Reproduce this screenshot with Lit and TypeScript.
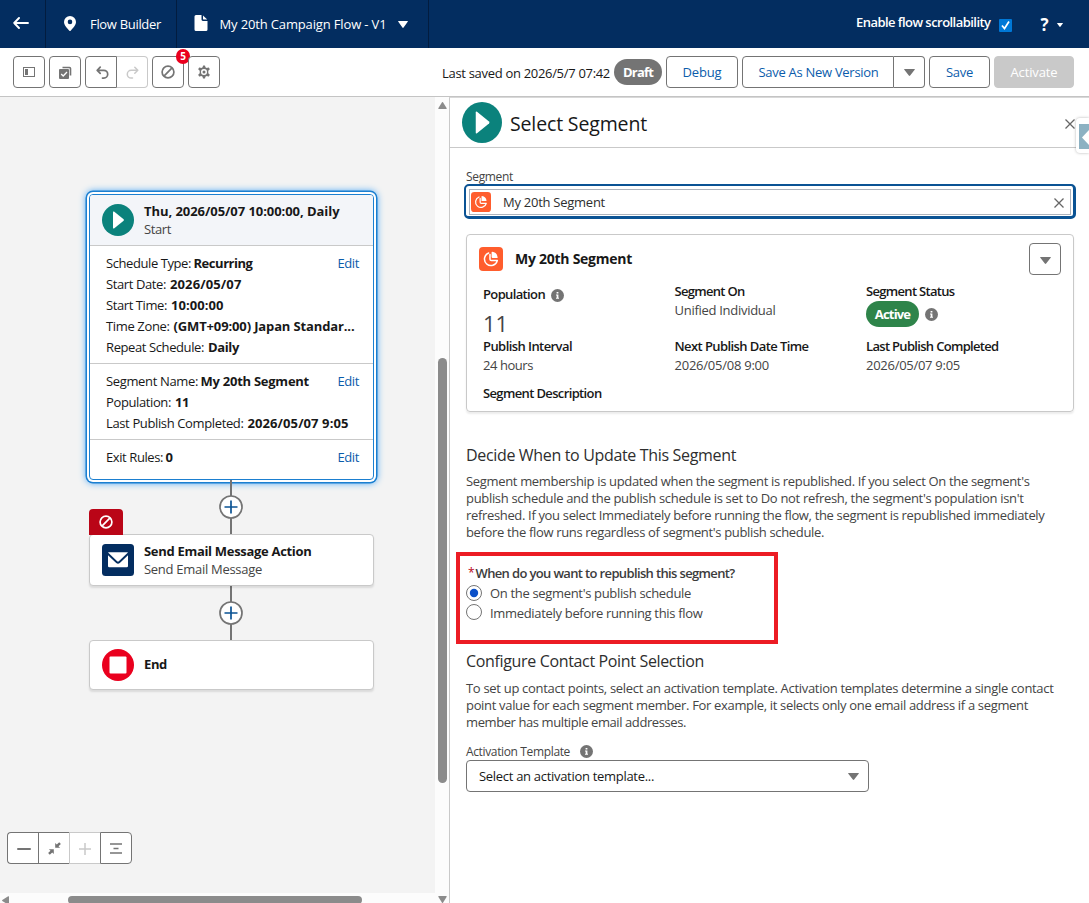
import { LitElement, html, css, svg } from "lit";
import { customElement, property } from "lit/decorators.js";

/** A single line of text tracked so that it fills a given advance width. */
@customElement("fit-line")
class FitLine extends LitElement {
  @property() text = "";
  @property({ type: Number }) w = 0;
  static styles = css`
    :host { display: inline-block; white-space: pre; flex: none; }
  `;
  updated() {
    this.style.letterSpacing = "0px";
    const natural = this.getBoundingClientRect().width;
    const gap = (this.w - natural) / Math.max(1, this.text.length);
    this.style.letterSpacing = gap.toFixed(3) + "px";
  }
  render() {
    return html`${this.text}`;
  }
}

const t = (text: string, w: number, cls = "") =>
  html`<fit-line class=${cls} .text=${text} .w=${w}></fit-line>`;

const ban = (s: number) => svg`<svg width=${s} height=${s} viewBox="0 0 14 14" fill="none" stroke="currentColor" stroke-width="1.7"><circle cx="7" cy="7" r="5.9"/><path d="M3.2 10.8L10.8 3.2"/></svg>`;
const caret = (w: number, h: number) => svg`<svg width=${w} height=${h} viewBox="0 0 10 6" preserveAspectRatio="none" fill="currentColor"><path d="M.6 0h8.8q.9 0 .3.7L5.6 5.6q-.6.6-1.2 0L.3.7Q-.3 0 .6 0z"/></svg>`;
const cross = (s: number) => svg`<svg width=${s} height=${s} viewBox="0 0 10 10" fill="none" stroke="currentColor" stroke-width="1.3"><path d="M.5.5l9 9M9.5.5l-9 9"/></svg>`;
const info = html`<svg class="info" width="13" height="13" viewBox="0 0 13 13"><circle cx="6.5" cy="6.5" r="6.5" fill="#747474"/><path fill="#fff" d="M5.6 2.9h1.8v1.6H5.6zM5 5.4h2.4v3.4H8v1H5v-1h.7V6.4H5z"/></svg>`;
const play = (w: number, h: number) => html`<svg class="play" width=${w} height=${h} viewBox="0 0 32 32" preserveAspectRatio="none"><circle cx="16" cy="16" r="16" fill="#0b827c"/><path fill="#fff" d="M11 8.2q0-1.2 1-.6l9.600 7.700q.7.700 0 1.400L12 24.400q-1 .6-1-.6z"/></svg>`;
const pie = (s: number) => html`<svg width=${s} height=${s} viewBox="0 0 24 24"><rect width="24" height="24" rx="4" fill="#ff5d2d"/><path fill="none" stroke="#fff" stroke-width="1.500" stroke-linejoin="round" stroke-linecap="round" d="M9.600 6A6.500 6.500 0 1 0 18.300 13.600H12.400Q11 13.600 11 12.200V7.500"/><path fill="#fff" d="M12.600 5.300q0-.6.6-.5a6.300 6.300 0 0 1 5.400 5.400q.1.700-.5.700h-4.700q-.8 0-.8-.8z"/></svg>`;
const plusDot = html`<div class="stem"><svg width="24" height="24" viewBox="0 0 24 24"><circle cx="12" cy="12" r="11" fill="#fff" stroke="#747474" stroke-width="1.700"/><path d="M5.500 12h13M12 5.500v13" stroke="#0b5394" stroke-width="1.700"/></svg></div>`;

const row = (label: string, lw: number, value: string, vw: number, edit = false) => html`
  <div class="row ${edit ? "first" : ""}">
    ${t(label, lw)}${t(value, vw, "b")}${edit ? html`<span class="edit">${t("Edit", 21.5)}</span>` : ""}
  </div>`;

@customElement("app-root")
class AppRoot extends LitElement {
  static styles = css`
    * { box-sizing: border-box; }
    :host { display: flex; flex-direction: column; width: 1089px; height: 903px; overflow: hidden; background: #fff; color: #181818; font: 13px/18px "Open Sans", "Noto Sans", sans-serif; }
    svg { display: block; flex: none; }
    .b { font-weight: 700; }
    .semi { font-weight: 600; }

    .top { height: 48px; flex: none; background: #032d60; color: #fff; display: flex; align-items: center; }
    .top .cell { height: 48px; display: flex; align-items: center; border-right: 1px solid #021c3f; }
    .back { width: 46px; padding: 0 0 2px 13px; }
    .brand { width: 131px; padding-left: 18px; gap: 14px; }
    .brand svg, .doc svg { margin-top: -2px; }
    .doc { width: 252px; padding-left: 17px; gap: 11.500px; }
    .doc .caret svg { margin-top: 1px; }
    .enable { margin-left: 427px; display: flex; align-items: center; gap: 8px; }
    .enable fit-line { margin-top: -4px; }
    .check { width: 13px; height: 13px; background: #0078d7; margin-top: 3px; border-radius: 1px; }
    .help { margin-left: 29px; display: flex; align-items: center; gap: 7px; font-size: 17px; }
    .help fit-line { margin-top: 2px; }
    .help svg { margin-top: 1px; }

    .bar { height: 49px; flex: none; border-bottom: 1px solid #c4c4c4; display: flex; align-items: center; padding: 0 15px 1px 13px; gap: 4px; }
    .btn { height: 32px; border: 1px solid #747474; border-radius: 4px; display: flex; align-items: center; justify-content: center; color: #747474; background: #fff; flex: none; }
    .btn.ib { width: 32px; position: relative; padding-top: 1px; }
    .pair { display: flex; }
    .pair .ib:first-child { border-radius: 4px 0 0 4px; padding-left: 2px; }
    .pair .ib:last-child { border-radius: 0 4px 4px 0; border-left: 0; width: 31px; }
    .off { border-color: #c9c9c9; color: #c9c9c9; }
    .badge { position: absolute; left: 23px; top: -8px; width: 14px; height: 15px; border-radius: 7px; background: #ea001e; color: #fff; font: 700 10px/15px "Open Sans", sans-serif; text-align: center; }
    .right { margin-left: auto; display: flex; align-items: center; gap: 4px; }
    .right .when { margin-top: 2px; }
    .link { color: #0b5cab; }
    .pill { height: 26px; border-radius: 13px; display: flex; align-items: center; justify-content: center; color: #fff; font-weight: 700; background: #747474; width: 48px; }
    .debug { width: 72px; }
    .saveas { width: 152px; border-radius: 4px 0 0 4px; padding-left: 1px; }
    .more { width: 31px; border-left: 0; border-radius: 0 4px 4px 0; padding-top: 2px; }
    .save { width: 61px; }
    .activate { width: 80px; background: #c9c9c9; border-color: #c9c9c9; color: #fff; }

    .main { flex: 1; min-height: 0; display: flex; }
    .work { width: 435px; display: flex; flex-direction: column; flex: none; }
    .canvas { height: 796px; background: #f3f3f3; padding: 97px 0 0 89px; position: relative; flex: none; }
    .node { width: 285px; background: #fff; border: 1px solid #c9c9c9; border-radius: 4px; box-shadow: 0 2px 2px rgba(0,0,0,.1); display: flex; align-items: center; padding-left: 12px; gap: 10px; }
    .titles { display: flex; flex-direction: column; align-items: flex-start; }
    .titles .sub { color: #444; }
    .start { display: block; padding: 0; height: 286px; border-color: #1b7fd0; box-shadow: 0 0 0 2px #fff, 0 0 0 3.500px #1b7fd0, 0 0 7px 3px #3fa2f5; }
    .head { height: 51px; display: flex; align-items: center; gap: 10px; padding-left: 12px; background: #f3f5f9; border-bottom: 1px solid #c9c9c9; border-radius: 3px 3px 0 0; }
    .sect { padding: 7px 14px 5px 16px; border-bottom: 1px solid #c9c9c9; }
    .sect:last-child { border: 0; }
    .row { display: flex; line-height: 21px; gap: 4px; }
    .row.first { gap: 2.500px; }
    .edit { margin-left: auto; color: #0b5cab; }
    .stem { width: 285px; height: 54px; display: flex; align-items: center; justify-content: center; padding-right: 1px; background: linear-gradient(#747474, #747474) 141px 0 / 2px 100% no-repeat; }
    .mail { height: 52px; position: relative; }
    .err { position: absolute; left: -1px; top: -26px; width: 34px; height: 26px; background: #ba0517; border-radius: 4px 4px 0 0; color: #fff; display: flex; align-items: center; justify-content: center; }
    .end { height: 50px; }
    .end fit-line { margin-top: -2px; }
    .zoomer { position: absolute; left: 7px; top: 735px; display: flex; }
    .zoomer .btn { width: 31px; border-radius: 0; border-right-width: 0; padding-top: 1px; }
    .zoomer .btn:first-child { border-radius: 4px 0 0 4px; padding-left: 2px; }
    .zoomer .btn:nth-child(3) { border-left: 1px solid #c9c9c9; }
    .zoomer .btn:last-child { width: 32px; border-right-width: 1px; border-radius: 0 4px 4px 0; }
    .hbar { height: 10px; background: #fcfcfc; display: flex; padding: 3px 0 0 2px; gap: 59px; }
    .hthumb { width: 294px; height: 8px; border-radius: 4px; background: #8b8b8b; }
    .vbar { width: 14px; flex: none; background: #fcfcfc; display: flex; flex-direction: column; align-items: center; padding: 5px 0 0 1px; color: #8b8b8b; }
    .vthumb { width: 9px; height: 427px; border-radius: 5px; background: #8b8b8b; margin: 249px 0 113px; }

    .panel { flex: 1; min-width: 0; border-left: 1px solid #c9c9c9; border-top: 1px solid #d8d8d8; position: relative; }
    .phead { height: 50px; border-bottom: 1px solid #c9c9c9; display: flex; align-items: center; padding: 0 14px 0 12px; gap: 8px; }
    .phead .ttl { font-size: 19.500px; line-height: 26px; margin-top: 3px; }
    .x { margin-left: auto; color: #666; }
    .phead .x { margin-top: 2px; }
    .tab { position: absolute; right: 0; top: 20px; width: 13px; height: 35px; background: #fff; border-radius: 4px 0 0 4px; box-shadow: 0 0 3px rgba(0,0,0,.3); padding: 6px 0 0 3px; }
    .body { padding: 20px 15px 0 16px; color: #444; }
    .lab { font-size: 12px; line-height: 16px; display: flex; align-items: center; gap: 10px; }
    .lab fit-line { position: relative; top: 1px; }
    .combo { height: 35px; margin: 0 -2px; border: 2.500px solid #0b5394; border-width: 2px 3px 3px 2px; border-radius: 5px; padding: 3px 2px 2px 3px; }
    .combo .in { height: 26px; border: 1px solid #aeb4bd; display: flex; align-items: center; padding: 0 6px 0 1px; gap: 12px; color: #2e2e2e; }
    .combo .x { margin-top: 1px; }
    .card { margin-top: 15px; height: 178px; border: 1px solid #c9c9c9; border-radius: 4px; box-shadow: 0 2px 2px rgba(0,0,0,.08); }
    .chead { display: flex; align-items: center; margin-top: 8px; padding: 0 12px; gap: 12px; color: #181818; font-size: 14px; height: 32px; }
    .chead .btn { width: 32px; margin-left: auto; padding-top: 2px; }
    .grid { display: grid; grid-template-columns: 191.500px 191.500px 1fr; grid-template-rows: 55px 47px 18px; padding: 7px 0 0 16px; }
    .cellc { display: flex; flex-direction: column; align-items: flex-start; }
    .cellc .b { color: #181818; font-weight: 600; }
    .inl { display: flex; align-items: center; gap: 6px; }
    .pop { margin-top: 3px; }
    .pop svg { margin-top: 2px; }
    .big { font-size: 22px; line-height: 30px; margin: 5px 0 0 0; }
    .v { margin-top: 1px; }
    .act { background: #2e844a; width: 53px; margin-top: 1px; }
    .act + svg { margin-top: 2px; }
    .h { font-size: 16px; line-height: 20px; color: #2e2e2e; display: flex; }
    .h.decide { margin-top: 33px; }
    .h.config { margin-top: 7px; }
    .p { margin-top: 8px; line-height: 17px; display: flex; flex-direction: column; align-items: flex-start; }
    .config + .p { margin-top: 9px; }
    .box { width: 322px; height: 92px; margin: 11px 0 0 -10px; border: 4px solid #ec1c24; padding: 7px 0 0 6px; }
    .q { display: flex; padding-left: 2px; height: 20px; line-height: 20px; gap: 2px; }
    .q .b { font-weight: 600; color: #3c3c3c; }
    .q .ast { color: #ba0517; font-size: 12px; }
    .opt { display: flex; align-items: center; height: 20px; gap: 8px; }
    .opt + .opt svg { margin-top: -2px; }
    .lab.tmpl { margin-top: 12px; }
    .sel { width: 403px; height: 32px; border: 1px solid #747474; border-radius: 4px; display: flex; align-items: center; justify-content: space-between; padding: 0 9px 0 12px; color: #181818; margin-top: 1px; }
    .gray { color: #747474; display: flex; padding-top: 1px; }
  `;

  render() {
    return html`
      <header class="top">
        <div class="cell back"><svg width="16" height="12" viewBox="0 0 16 12" fill="none" stroke="#fff" stroke-width="1.900" stroke-linecap="round" stroke-linejoin="round"><path d="M15 6H1.200M6 1L1.200 6 6 11"/></svg></div>
        <div class="cell brand"><svg width="12" height="15" viewBox="0 0 12 15"><path fill="#fff" fill-rule="evenodd" d="M6 0a6 6 0 0 1 6 6c0 3.500-3.800 7-5.400 8.700q-.6.600-1.200 0C3.800 13 0 9.500 0 6a6 6 0 0 1 6-6zm0 3.600a2.300 2.300 0 1 0 0 4.600 2.300 2.300 0 0 0 0-4.600z"/></svg>${t("Flow Builder", 71)}</div>
        <div class="cell doc"><svg width="14" height="16" viewBox="0 0 14 16" fill="#fff"><path d="M2 0h5.500v4.500q0 1.400 1.400 1.400H13.500V14.500q0 1.500-1.500 1.500H2Q.500 16 .500 14.500v-13Q.500 0 2 0z"/><path d="M9 .4l4.200 4.100H9.400q-.4 0-.4-.4z"/></svg>${t("My 20th Campaign Flow - V1", 167)}<span class="caret">${caret(10, 7)}</span></div>
        <div class="enable">${t("Enable flow scrollability", 134.5, "semi")}<div class="check"><svg width="13" height="13" viewBox="0 0 13 13" fill="none" stroke="#fff" stroke-width="1.700"><path d="M3 6.500l2.500 3L10 2.500"/></svg></div></div>
        <div class="help">${t("?", 9, "b")}${caret(6, 4)}</div>
      </header>

      <div class="bar">
        <div class="btn ib"><svg width="12" height="10" viewBox="0 0 12 10"><rect x=".5" y=".5" width="11" height="9" fill="none" stroke="#747474"/><rect x="2" y="2" width="3" height="6" fill="#747474"/></svg></div>
        <div class="btn ib"><svg width="13" height="13" viewBox="0 0 13 13"><path d="M3.500 1.500h7q1 0 1 1v7" fill="none" stroke="#747474" stroke-width="1.600"/><rect y="3" width="10" height="10" rx="1" fill="#747474"/><path d="M2.200 8l2 2L8 6" fill="none" stroke="#fff" stroke-width="1.300"/></svg></div>
        <div class="pair">
          <div class="btn ib"><svg width="13" height="13" viewBox="0 0 13 13" fill="none" stroke="currentColor" stroke-width="1.700" stroke-linecap="round" stroke-linejoin="round"><path d="M4.200 1.200L1.200 4.300l3 3M1.500 4.300h6.300a3.900 3.900 0 0 1 0 7.800H6.500"/></svg></div>
          <div class="btn ib off"><svg width="13" height="13" viewBox="0 0 13 13" fill="none" stroke="currentColor" stroke-width="1.500" stroke-linecap="round" stroke-linejoin="round"><path d="M8.800 1.200l3 3.100-3 3M11.500 4.300H5.200a3.900 3.900 0 0 0 0 7.800h1.300"/></svg></div>
        </div>
        <div class="btn ib">${ban(14)}<span class="badge">5</span></div>
        <div class="btn ib"><svg width="14" height="14" viewBox="0 0 14 14"><path fill="#747474" fill-rule="evenodd" d="M6 .7Q6 .4 6.400.4h1.200q.4 0 .5.400l.3 1.500 1.300.8 1.700-.5q.4-.1.600.2l.7 1.200q.2.400-.1.600L11.300 5.800v2.400l1.300 1.200q.3.200.1.600L12 11.200q-.2.300-.6.200l-1.700-.5-1.300.8-.3 1.500q-.1.400-.5.400H6.400q-.4 0-.5-.4l-.3-1.500-1.300-.8-1.700.5q-.4.100-.6-.2L1.300 10q-.2-.4.100-.6l1.300-1.200V5.800L1.400 4.600q-.3-.2-.1-.6L2 2.800q.2-.3.600-.2l1.700.5 1.300-.8zM7 4a3 3 0 1 0 0 6 3 3 0 0 0 0-6z"/><circle cx="7" cy="7" r="1.500" fill="#747474"/></svg></div>
        <div class="right">
          ${t("Last saved on 2026/5/7 07:42", 168, "when")}
          <div class="pill">${t("Draft", 30)}</div>
          <div class="btn debug link">${t("Debug", 39)}</div>
          <div class="pair"><div class="btn saveas link">${t("Save As New Version", 120)}</div><div class="btn more">${caret(11, 7)}</div></div>
          <div class="btn save link">${t("Save", 27)}</div>
          <div class="btn activate">${t("Activate", 47)}</div>
        </div>
      </div>

      <div class="main">
        <div class="work">
          <div class="canvas">
            <div class="node start">
              <div class="head">${play(32, 32)}<div class="titles">${t("Thu, 2026/05/07 10:00:00, Daily", 195.5, "b")}${t("Start", 27, "sub")}</div></div>
              <div class="sect">
                ${row("Schedule Type:", 85, "Recurring", 59, true)}
                ${row("Start Date:", 60, "2026/05/07", 71.5)}
                ${row("Start Time:", 61, "10:00:00", 52.5)}
                ${row("Time Zone:", 63.5, "(GMT+09:00) Japan Standar...", 181)}
                ${row("Repeat Schedule:", 98, "Daily", 31)}
              </div>
              <div class="sect">
                ${row("Segment Name:", 92, "My 20th Segment", 108.5, true)}
                ${row("Population:", 65, "11", 14)}
                ${row("Last Publish Completed:", 137.5, "2026/05/07 9:05", 101)}
              </div>
              <div class="sect">${row("Exit Rules:", 57, "0", 7.5, true)}</div>
            </div>
            ${plusDot}
            <div class="node mail">
              <span class="err">${ban(14)}</span>
              <svg width="32" height="32" viewBox="0 0 32 32"><rect width="32" height="32" rx="3.500" fill="#032d60"/><path fill="#fff" d="M6.500 8.300h19q.6 0 .2.500l-8.900 8.500q-.8.700-1.600 0L6.300 8.800q-.4-.5.200-.5zM6 11.200l8.200 7.900q1.800 1.500 3.600 0L26 11.200V22q0 1.300-1.300 1.300H7.300Q6 23.300 6 22z"/></svg>
              <div class="titles">${t("Send Email Message Action", 167.5, "b")}${t("Send Email Message", 118, "sub")}</div>
            </div>
            ${plusDot}
            <div class="node end">
              <svg width="32" height="32" viewBox="0 0 32 32"><circle cx="16" cy="16" r="16" fill="#ea001e"/><rect x="7.500" y="7.500" width="17" height="17" rx="1" fill="#fff"/></svg>
              ${t("End", 23, "b")}
            </div>
            <div class="zoomer">
              <div class="btn"><svg width="14" height="2"><rect width="14" height="2" rx="1" fill="#747474"/></svg></div>
              <div class="btn"><svg width="13" height="13" viewBox="0 0 13 13" fill="#747474"><path d="M7.200.9v4.900h4.900L10.500 4.200 12.900 1.900 11.200.2 8.800 2.500zM5.800 12.100V7.200H.9l1.600 1.600L.1 11.100l1.700 1.700 2.400-2.300z"/></svg></div>
              <div class="btn off"><svg width="12" height="12" stroke="#c9c9c9" stroke-width="1.500"><path d="M0 6h12M6 0v12"/></svg></div>
              <div class="btn"><svg width="12" height="11" stroke="#747474" stroke-width="1.500"><path d="M0 1h12M3.500 5.500h5M0 10h12"/></svg></div>
            </div>
          </div>
          <div class="hbar"><svg width="7" height="9" viewBox="0 0 7 9"><path fill="#8b8b8b" d="M7 .8v7.400q0 .8-.8.500L.3 5Q-.2 4.500.3 4L6.200.3Q7 0 7 .8z"/></svg><div class="hthumb"></div></div>
        </div>
        <div class="vbar">
          <svg width="9" height="7" viewBox="0 0 9 7" fill="currentColor"><path d="M.8 7h7.400q.8 0 .5-.8L5 .3Q4.500-.2 4 .3L.3 6.200Q0 7 .8 7z"/></svg>
          <div class="vthumb"></div>
          <svg width="9" height="7" viewBox="0 0 9 7" fill="currentColor"><path d="M.8 0h7.400q.8 0 .5.800L5 6.700q-.5.500-1 0L.3.8Q0 0 .8 0z"/></svg>
        </div>

        <section class="panel">
          <div class="phead">${play(40, 41)}${t("Select Segment", 137, "ttl")}<span class="x">${cross(10)}</span></div>
          <div class="tab"><svg width="11" height="25" viewBox="0 0 11 25"><rect width="11" height="25" fill="#8cb1c2"/><path fill="#fff" d="M3 13.500L11 5v17z"/></svg></div>
          <div class="body">
            <div class="lab">${t("Segment", 47)}</div>
            <div class="combo"><div class="in">${pie(20)}${t("My 20th Segment", 102)}<span class="x">${cross(10)}</span></div></div>
            <div class="card">
              <div class="chead">${pie(24)}${t("My 20th Segment", 117, "b")}<div class="btn">${caret(11, 7)}</div></div>
              <div class="grid">
                <div class="cellc"><div class="inl pop">${t("Population", 62, "b")}${info}</div>${t("11", 25, "big")}</div>
                <div class="cellc">${t("Segment On", 70, "b")}${t("Unified Individual", 101, "v")}</div>
                <div class="cellc">${t("Segment Status", 88.5, "b")}<div class="inl"><div class="pill act">${t("Active", 35.5)}</div>${info}</div></div>
                <div class="cellc">${t("Publish Interval", 89, "b")}${t("24 hours", 50, "v")}</div>
                <div class="cellc">${t("Next Publish Date Time", 134, "b")}${t("2026/05/08 9:00", 94.5, "v")}</div>
                <div class="cellc">${t("Last Publish Completed", 132.5, "b")}${t("2026/05/07 9:05", 94, "v")}</div>
                <div class="cellc">${t("Segment Description", 118.5, "b")}</div>
              </div>
            </div>
            <div class="h decide">${t("Decide When to Update This Segment", 270)}</div>
            <div class="p">
              ${t("Segment membership is updated when the segment is republished. If you select On the segment's", 563.5)}
              ${t("publish schedule and the publish schedule is set to Do not refresh, the segment's population isn't", 557.5)}
              ${t("refreshed. If you select Immediately before running the flow, the segment is republished immediately", 578.5)}
              ${t("before the flow runs regardless of segment's publish schedule.", 358)}
            </div>
            <div class="box">
              <div class="q">${t("*", 5.5, "ast")}${t("When do you want to republish this segment?", 259, "b")}</div>
              <div class="opt"><svg width="16" height="16"><circle cx="8" cy="8" r="7.500" fill="#fff" stroke="#747474"/><circle cx="8" cy="8" r="4.200" fill="#0b50c8"/></svg>${t("On the segment's publish schedule", 201)}</div>
              <div class="opt"><svg width="16" height="16"><circle cx="8" cy="8" r="7.500" fill="#fff" stroke="#747474"/></svg>${t("Immediately before running this flow", 212.5)}</div>
            </div>
            <div class="h config">${t("Configure Contact Point Selection", 238)}</div>
            <div class="p">
              ${t("To set up contact points, select an activation template. Activation templates determine a single contact", 587.5)}
              ${t("point value for each segment member. For example, it selects only one email address if a segment", 562)}
              ${t("member has multiple email addresses.", 220)}
            </div>
            <div class="lab tmpl">${t("Activation Template", 104)}${info}</div>
            <div class="sel">${t("Select an activation template...", 175)}<span class="gray">${caret(11, 7)}</span></div>
          </div>
        </section>
      </div>
    `;
  }
}
